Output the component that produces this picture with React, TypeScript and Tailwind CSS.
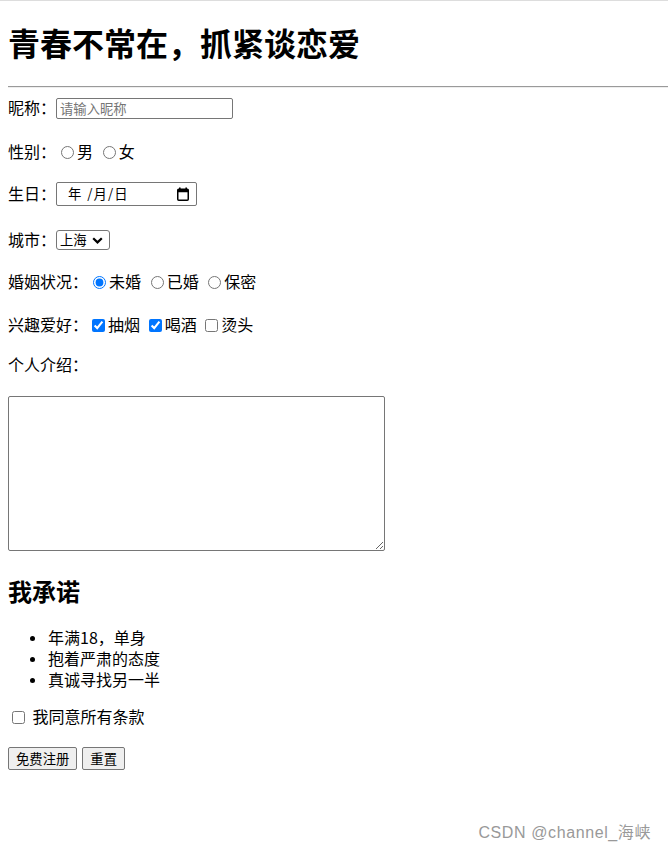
import React from "react";

function Radio({ name, checked, first }: { name: string; checked?: boolean; first?: boolean }) {
  return (
    <input
      type="radio"
      name={name}
      defaultChecked={checked}
      className={
        first
          ? "m-0 ml-[5px] mr-[3px] h-[13px] w-[13px] shrink-0"
          : "m-0 ml-[9.6px] mr-[3px] h-[13px] w-[13px] shrink-0"
      }
    />
  );
}

function Check({ checked, first }: { checked?: boolean; first?: boolean }) {
  return (
    <input
      type="checkbox"
      defaultChecked={checked}
      className={
        first
          ? "m-0 ml-[4px] mr-[3px] h-[13px] w-[13px] shrink-0"
          : "m-0 ml-[8.6px] mr-[3px] h-[13px] w-[13px] shrink-0"
      }
    />
  );
}

function T({ children }: { children: React.ReactNode }) {
  return <span className="pb-[3px]">{children}</span>;
}

function CalendarIcon() {
  return (
    <svg width="12" height="14" viewBox="0 0 12 14" className="shrink-0">
      <rect x="2" y="0.5" width="1.6" height="2.5" fill="#000" />
      <rect x="8.4" y="0.5" width="1.6" height="2.5" fill="#000" />
      <rect x="0.75" y="2.25" width="10.5" height="11" rx="1" fill="none" stroke="#000" strokeWidth="1.5" />
      <rect x="0.75" y="2.25" width="10.5" height="3" fill="#000" />
    </svg>
  );
}

function Chevron() {
  return (
    <svg width="11" height="7" viewBox="0 0 11 7" className="ml-[5px] shrink-0">
      <path d="M1.2 1.2 L5.5 5.4 L9.8 1.2" fill="none" stroke="#000" strokeWidth="2.2" />
    </svg>
  );
}

export default function App() {
  return (
    <div className="relative min-h-[855px] bg-white text-black text-[16px] font-['Noto_Sans_CJK_SC',sans-serif]">
      <div className="h-px bg-[#dddddd]" />
      <div className="pl-2">
        <h1 className="mt-[20px] h-[43px] text-[32px] font-bold leading-[43px]">青春不常在，抓紧谈恋爱</h1>
        <div className="mt-[22px] border-t border-b border-t-[#9a9a9a] border-b-[#eeeeee]" />

        <div className="mt-[9px] flex h-[22px] items-center leading-[22px]">
          <T>昵称：</T>
          <input
            type="text"
            placeholder="请输入昵称"
            className="h-[21px] w-[177px] rounded-[2px] border border-[#767676] pl-[3px] text-[13.33px] leading-[17px] outline-none placeholder:text-[#757575]"
          />
        </div>

        <div className="mt-[22px] flex h-[23px] items-center leading-[22px]">
          <T>性别：</T>
          <Radio name="sex" first />
          <T>男</T>
          <Radio name="sex" />
          <T>女</T>
        </div>

        <div className="mt-[18px] flex h-[24px] items-center leading-[22px]">
          <T>生日：</T>
          <div className="flex h-[24px] w-[141px] items-center rounded-[2px] border border-[#767676] pl-[11px] pr-[7px] text-[13.33px] leading-[18px]">
            <span>年</span>
            <span className="ml-[6px]">/</span>
            <span className="ml-[1px]">月</span>
            <span className="ml-[1px]">/</span>
            <span className="ml-[1px]">日</span>
            <span className="ml-auto flex">
              <CalendarIcon />
            </span>
          </div>
        </div>

        <div className="mt-[23px] flex h-[22px] items-center leading-[22px]">
          <T>城市：</T>
          <div className="flex h-[20px] w-[54px] items-center rounded-[3px] border border-[#767676] pl-[3px] text-[13.33px] leading-[18px]">
            <span>上海</span>
            <Chevron />
          </div>
        </div>

        <div className="mt-[20px] flex h-[22px] items-center leading-[22px]">
          <T>婚姻状况：</T>
          <Radio name="marry" checked first />
          <T>未婚</T>
          <Radio name="marry" />
          <T>已婚</T>
          <Radio name="marry" />
          <T>保密</T>
        </div>

        <div className="mt-[21px] flex h-[22px] items-center leading-[22px]">
          <T>兴趣爱好：</T>
          <Check checked first />
          <T>抽烟</T>
          <Check checked />
          <T>喝酒</T>
          <Check />
          <T>烫头</T>
        </div>

        <div className="mt-[18px] flex h-[22px] items-center leading-[22px]">
          <T>个人介绍：</T>
        </div>

        <textarea className="mt-[20px] block h-[155px] w-[377px] rounded-[2px] border border-[#767676] outline-none" />

        <h2 className="mt-[24px] h-[32px] text-[24px] font-bold leading-[32px]">我承诺</h2>

        <ul className="mt-[21px]">
          {["年满18，单身", "抱着严肃的态度", "真诚寻找另一半"].map((t) => (
            <li key={t} className="flex h-[21px] items-center leading-[21px]">
              <span className="mb-[1px] ml-[22px] mr-[13px] h-[5px] w-[5px] rounded-full bg-black" />
              <T>{t}</T>
            </li>
          ))}
        </ul>

        <div className="mt-[15px] flex h-[22px] items-center leading-[22px]">
          <input type="checkbox" className="m-0 ml-[4px] mr-[7.6px] h-[13px] w-[13px]" />
          <T>我同意所有条款</T>
        </div>

        <div className="mt-[19px] flex items-center">
          <button className="h-[23px] rounded-[2px] border border-[#767676] bg-[#efefef] px-[7px] text-[13.33px] leading-[18px]">
            免费注册
          </button>
          <button className="ml-[5px] h-[23px] rounded-[2px] border border-[#767676] bg-[#efefef] px-[7px] text-[13.33px] leading-[18px]">
            重置
          </button>
        </div>
      </div>

      <div className="absolute bottom-[12px] right-[17px] text-[16px] leading-[20px] tracking-[0.6px] text-[#999999] font-['Liberation_Sans','Noto_Sans_CJK_SC',sans-serif]">
        CSDN @channel_海峡
      </div>
    </div>
  );
}
